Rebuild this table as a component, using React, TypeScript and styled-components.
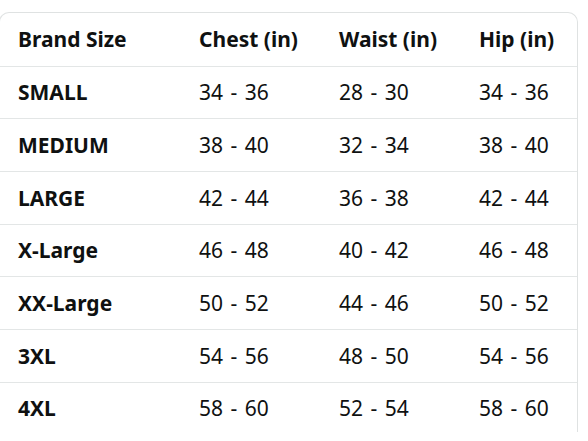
import React from "react";
import styled, { createGlobalStyle } from "styled-components";

const Global = createGlobalStyle`
  html, body { margin: 0; padding: 0; background: #ffffff; }
  body { font-family: "Noto Sans", "Open Sans", Arial, sans-serif; color: #0f1111; }
`;

const Page = styled.div`
  width: 588px;
  height: 441px;
  overflow: hidden;
  padding-top: 12px;
  box-sizing: border-box;
`;

const Card = styled.div`
  margin-left: -1px;
  width: 579px;
  height: 420px;
  box-sizing: border-box;
  border: 1px solid #dfe2e2;
  border-bottom: none;
  border-radius: 10px 10px 0 0;
  overflow: hidden;
`;

const Table = styled.table`
  width: 100%;
  border-collapse: collapse;
  table-layout: fixed;
`;

const Row = styled.tr<{ $head?: boolean }>`
  height: ${(p) => (p.$head ? "53px" : "52.7px")};
  border-bottom: 1px solid #e3e6e6;
`;

const Cell = styled.td<{ $bold?: boolean; $w?: number }>`
  box-sizing: border-box;
  padding: 0 0 0 18px;
  font-size: 21px;
  font-weight: ${(p) => (p.$bold ? 700 : 400)};
  word-spacing: ${(p) => (p.$bold ? "0" : "2px")};
  line-height: 24px;
  text-align: left;
  white-space: nowrap;
  vertical-align: middle;
  color: #0f1111;
  ${(p) => (p.$w ? `width: ${p.$w}px;` : "")}
`;

const head = ["Brand Size", "Chest (in)", "Waist (in)", "Hip (in)"];
const widths = [181, 140, 140, 0];
const rows: string[][] = [
  ["SMALL", "34 - 36", "28 - 30", "34 - 36"],
  ["MEDIUM", "38 - 40", "32 - 34", "38 - 40"],
  ["LARGE", "42 - 44", "36 - 38", "42 - 44"],
  ["X-Large", "46 - 48", "40 - 42", "46 - 48"],
  ["XX-Large", "50 - 52", "44 - 46", "50 - 52"],
  ["3XL", "54 - 56", "48 - 50", "54 - 56"],
  ["4XL", "58 - 60", "52 - 54", "58 - 60"],
];

export default function App() {
  return (
    <>
      <Global />
      <Page>
        <Card>
          <Table>
            <thead>
              <Row $head>
                {head.map((h, i) => (
                  <Cell as="th" key={h} $bold $w={widths[i] || undefined}>
                    {h}
                  </Cell>
                ))}
              </Row>
            </thead>
            <tbody>
              {rows.map((r) => (
                <Row key={r[0]}>
                  {r.map((c, i) => (
                    <Cell key={i} $bold={i === 0}>
                      {c}
                    </Cell>
                  ))}
                </Row>
              ))}
            </tbody>
          </Table>
        </Card>
      </Page>
    </>
  );
}
